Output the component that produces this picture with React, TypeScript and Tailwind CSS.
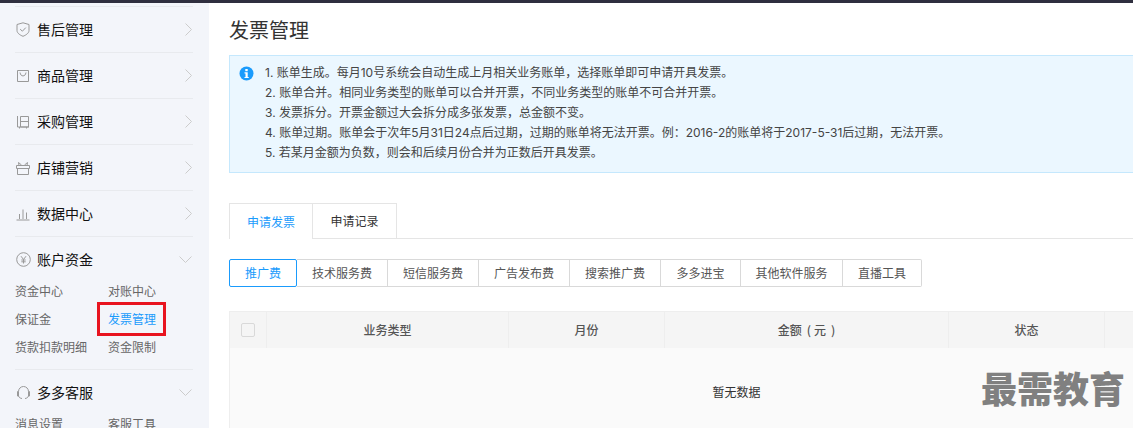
const notices = [
  "1. 账单生成。每月10号系统会自动生成上月相关业务账单，选择账单即可申请开具发票。",
  "2. 账单合并。相同业务类型的账单可以合并开票，不同业务类型的账单不可合并开票。",
  "3. 发票拆分。开票金额过大会拆分成多张发票，总金额不变。",
  "4. 账单过期。账单会于次年5月31日24点后过期，过期的账单将无法开票。例：2016-2的账单将于2017-5-31后过期，无法开票。",
  "5. 若某月金额为负数，则会和后续月份合并为正数后开具发票。",
];

const feeTabs = [
  { label: "技术服务费", width: "w-[91px]" },
  { label: "短信服务费", width: "w-[91px]" },
  { label: "广告发布费", width: "w-[91px]" },
  { label: "搜索推广费", width: "w-[91px]" },
  { label: "多多进宝", width: "w-[80px]" },
  { label: "其他软件服务", width: "w-[102px]" },
  { label: "直播工具", width: "w-[79px]" },
];

const ShieldIcon = () => (
  <svg width="14" height="15" viewBox="0 0 14 15" fill="none" stroke="#999" strokeWidth="1">
    <path d="M1 2.500 7 .8l6 1.700v6c0 2.600-3 4.600-6 5.800-3-1.200-6-3.200-6-5.800z" />
    <path d="M4.200 7.200 6.400 9.200 9.800 5.600" />
  </svg>
);

const BagIcon = () => (
  <svg width="14" height="14" viewBox="0 0 14 14" fill="none" stroke="#999" strokeWidth="1">
    <path d="M1.500 1.500h11v11h-11z" />
    <path d="M4 3.500c.4 2.400 1.500 3.400 3 3.400s2.600-1 3-3.400" />
  </svg>
);

const PurchaseIcon = () => (
  <svg width="14" height="14" viewBox="0 0 14 14" fill="none" stroke="#999" strokeWidth="1">
    <path d="M1.500 1v11h11.500M4.500 1.500h8v10.500h-8zM4.500 6.500h8" />
    <path d="M3.500 12v1.500M10.500 12v1.500" />
  </svg>
);

const GiftIcon = () => (
  <svg width="14" height="14" viewBox="0 0 14 14" fill="none" stroke="#999" strokeWidth="1">
    <path d="M.5 4.500h13v3h-13zM1.500 7.500h11v6h-11z" />
    <path d="M3 4.500 2.500 1.500 5.500 4M11 4.500l.5-3L8.500 4" />
  </svg>
);

const BarsIcon = () => (
  <svg width="14" height="14" viewBox="0 0 14 14" fill="none" stroke="#999" strokeWidth="1">
    <path d="M.5 13h13M3.500 7v5M7 2.500V12M10.500 5.500V12" />
  </svg>
);

const YenIcon = () => (
  <svg width="15" height="15" viewBox="0 0 15 15" fill="none" stroke="#999" strokeWidth="1">
    <circle cx="7.500" cy="7.500" r="6.800" />
    <path d="M5 4.200 7.500 7.500 10 4.200M7.500 7.500V11.500M5.300 8h4.400M5.300 9.800h4.400" />
  </svg>
);

const HeadsetIcon = () => (
  <svg width="15" height="15" viewBox="0 0 15 15" fill="none" stroke="#999" strokeWidth="1">
    <path d="M2.500 6.500a5 5 0 0 1 10 0" />
    <path d="M2.500 6.500h-1v4.500h1zM12.500 6.500h1v4.500h-1z" />
    <path d="M2.500 11c.5 1.500 1.800 2.300 3.500 2.500M12.500 11c-.5 1.500-1.800 2.300-3.500 2.500" />
  </svg>
);

const ChevronRight = () => (
  <svg width="7" height="13" viewBox="0 0 7 13" fill="none" stroke="#ccc" strokeWidth="1">
    <path d="M.5.500 6.500 6.500.5 12.500" />
  </svg>
);

const ChevronDown = () => (
  <svg width="13" height="7" viewBox="0 0 13 7" fill="none" stroke="#ccc" strokeWidth="1">
    <path d="M.5.500 6.500 6.500 12.500.5" />
  </svg>
);

const NavRow = ({ icon, label, open }: { icon: React.ReactNode; label: string; open?: boolean }) => (
  <div className="flex h-[45px] items-center">
    <div className="flex w-[22px] shrink-0 items-center pl-[1px]">{icon}</div>
    <span className="text-[14px] text-[#111]">{label}</span>
    <div className="ml-auto pr-[1px]">{open ? <ChevronDown /> : <ChevronRight />}</div>
  </div>
);

const SubLinks = ({ items }: { items: string[] }) => (
  <div className="-mt-[5px] grid grid-cols-[93px_1fr]">
    {items.map((item) => (
      <a
        key={item}
        className={`flex h-[28px] items-center text-[12px] ${
          item === "发票管理" ? "text-[#1a9bfc]" : "text-[#666]"
        }`}
      >
        {item}
      </a>
    ))}
  </div>
);

const Sidebar = () => (
  <aside className="relative w-[209px] shrink-0 bg-[#f3f5fa] pl-[15px] pr-[16px] pt-[3px]">
    <div className="border-y border-[#e8eaee]">
      <NavRow icon={<ShieldIcon />} label="售后管理" />
    </div>
    <div className="border-b border-[#e8eaee]">
      <NavRow icon={<BagIcon />} label="商品管理" />
    </div>
    <div className="border-b border-[#e8eaee]">
      <NavRow icon={<PurchaseIcon />} label="采购管理" />
    </div>
    <div className="border-b border-[#e8eaee]">
      <NavRow icon={<GiftIcon />} label="店铺营销" />
    </div>
    <div className="border-b border-[#e8eaee]">
      <NavRow icon={<BarsIcon />} label="数据中心" />
    </div>
    <div className="border-b border-[#e8eaee] pb-[8px]">
      <NavRow icon={<YenIcon />} label="账户资金" open />
      <SubLinks items={["资金中心", "对账中心", "保证金", "发票管理", "货款扣款明细", "资金限制"]} />
    </div>
    <div>
      <NavRow icon={<HeadsetIcon />} label="多多客服" open />
      <SubLinks items={["消息设置", "客服工具"]} />
    </div>
    {/* red highlight drawn over the screenshot */}
    <div className="absolute left-[97px] top-[299px] h-[34px] w-[69px] border-[3px] border-[#e8141f]" />
  </aside>
);

const Notice = () => (
  <div className="flex h-[118px] w-[950px] shrink-0 border border-[#c5e8fd] bg-[#ebf7ff] pl-[9px] pt-[7px] font-['Inter','Noto_Sans_CJK_SC',sans-serif]">
    <svg width="15" height="15" viewBox="0 0 15 15" className="mt-[3px] shrink-0">
      <circle cx="7.500" cy="7.500" r="7" fill="#1a9bfc" />
      <rect x="6.300" y="3" width="2.400" height="2.200" fill="#fff" />
      <path d="M5.500 6.300h3.200v4.600h1v1.200H5.500v-1.200h1V7.500h-1z" fill="#fff" />
    </svg>
    <div className="ml-[11px] text-[12px] leading-[20px] text-[#444]">
      {notices.map((line) => (
        <p key={line}>{line}</p>
      ))}
    </div>
  </div>
);

const FeeTabs = () => (
  <div className="mt-[20px] flex h-[28px] w-[693px] text-[12px] text-[#555]">
    <div className="flex w-[68px] shrink-0 items-center justify-center rounded-[2px] border border-[#1a9bfc] text-[#1a9bfc]">
      推广费
    </div>
    {feeTabs.map((tab) => (
      <div
        key={tab.label}
        className={`flex ${tab.width} shrink-0 items-center justify-center border-y border-r border-[#d9d9d9] last:rounded-r-[2px]`}
      >
        {tab.label}
      </div>
    ))}
  </div>
);

const Table = () => (
  <div className="mt-[24px] w-[1014px] border-l border-t border-[#eee] bg-[#fafafa]">
    <div className="flex h-[36px] bg-[#f5f5f5] text-[12px] font-medium text-[#555]">
      <div className="flex w-[37px] items-center justify-center border-r border-[#eee]">
        <span className="h-[14px] w-[14px] rounded-[2px] border border-[#d9d9d9]" />
      </div>
      <div className="flex w-[242px] items-center justify-center border-r border-[#eee]">业务类型</div>
      <div className="flex w-[156px] items-center justify-center border-r border-[#eee]">月份</div>
      <div className="flex w-[284px] items-center justify-center border-r border-[#eee]">
        金额
        <span className="ml-[5px]">(</span>
        <span className="ml-[3px]">元</span>
        <span className="ml-[5px]">)</span>
      </div>
      <div className="flex w-[156px] items-center justify-center border-r border-[#eee]">状态</div>
      <div className="flex-1" />
    </div>
    <div className="flex h-[88px] items-center justify-center text-[12px] text-[#333]">暂无数据</div>
  </div>
);

export default function App() {
  return (
    <div className="relative flex h-[428px] flex-col overflow-hidden bg-white font-['Noto_Sans_CJK_SC','Liberation_Sans',sans-serif]">
      <div className="h-[3px] shrink-0 bg-[#2f2f3f]" />
      <div className="flex min-h-0 flex-1">
        <Sidebar />
        <main className="min-w-0 flex-1 overflow-hidden pl-[20px]">
          <h1 className="mt-[12px] h-[29px] text-[20px] leading-[29px] text-[#333]">发票管理</h1>
          <div className="mt-[11px]">
            <Notice />
          </div>
          <div className="mt-[30px] flex h-[36px] border-b border-[#e5e5e5] text-[12px]">
            <div className="-mb-px flex w-[84px] items-center justify-center border-x border-t border-[#e5e5e5] bg-white text-[#1a9bfc]">
              申请发票
            </div>
            <div className="flex w-[84px] items-center justify-center border-r border-t border-[#e5e5e5] text-[#333]">
              申请记录
            </div>
          </div>
          <FeeTabs />
          <Table />
        </main>
      </div>
      {/* site watermark over the screenshot */}
      <div className="absolute left-[981px] top-[361px] text-[36px] font-black leading-[52px] text-[#808080]">
        最需教育
      </div>
    </div>
  );
}
